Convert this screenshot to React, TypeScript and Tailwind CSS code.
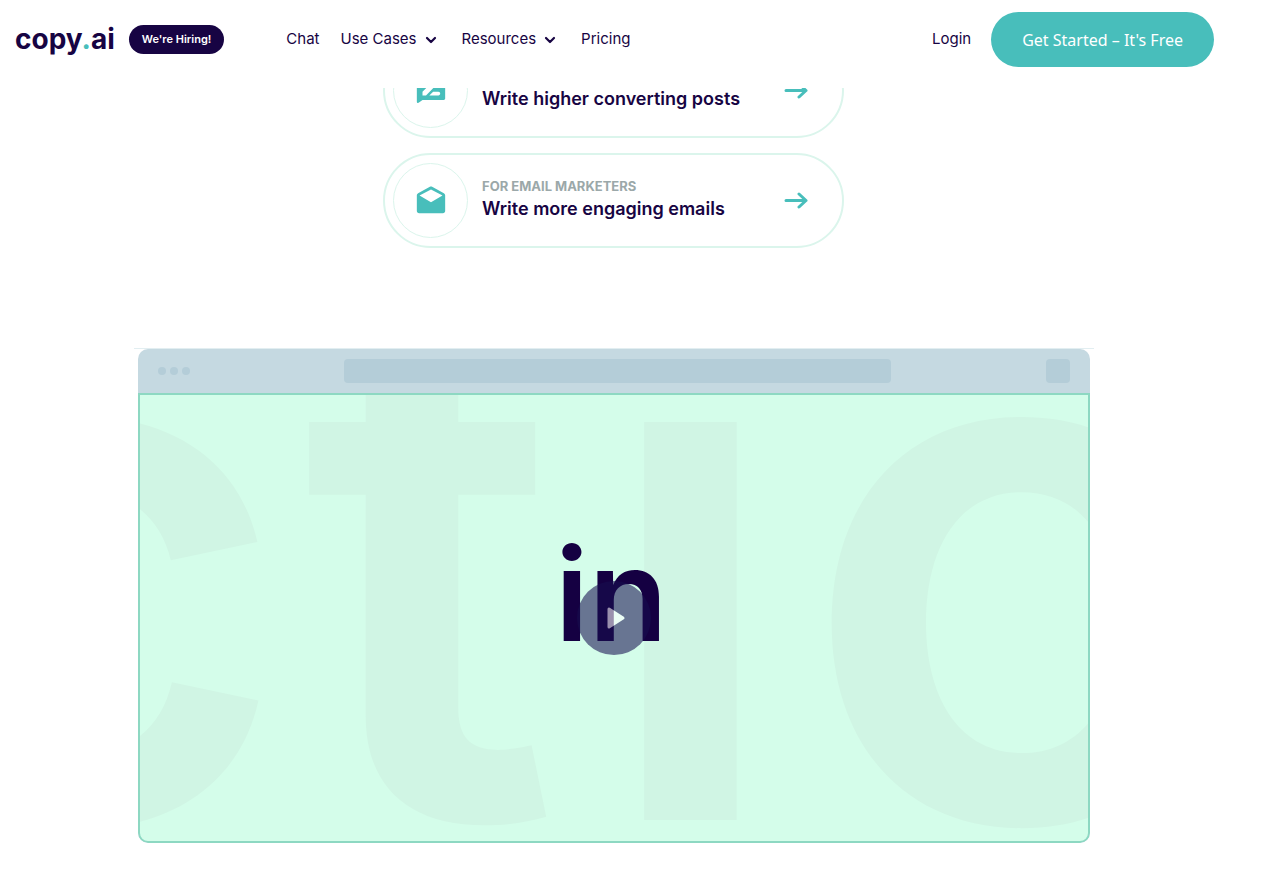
import React from "react";

type CardProps = { label?: string; title: string; icon: React.ReactNode };

function Chevron() {
  return (
    <svg width="12" height="8" viewBox="0 0 12 8" fill="none" stroke="currentColor" strokeWidth="2.2" strokeLinecap="round" strokeLinejoin="round" aria-hidden="true">
      <path d="M2 2l4 4 4-4" />
    </svg>
  );
}

function Arrow() {
  return (
    <svg width="24" height="18" viewBox="0 0 24 18" fill="none" stroke="currentColor" strokeWidth="3" strokeLinecap="round" strokeLinejoin="round" aria-hidden="true">
      <path d="M2 8.500h20M15 2l7 6.500-7 6.500" />
    </svg>
  );
}

function ReviewIcon() {
  return (
    <svg width="34" height="34" viewBox="0 0 24 24" fill="currentColor" aria-hidden="true">
      <path d="M21 2H3c-.55 0-1 .45-1 1v16.500c0 .8.800 1.200 1.500.7L6 18.300H21c.55 0 1-.45 1-1V3c0-.55-.45-1-1-1zM6 15.200v-2.670l6.880-6.880c.2-.2.51-.2.71 0l1.770 1.770c.2.2.2.51 0 .71L8.470 15.200H6zm11.200 0h-6.400l2.700-2.700h3.700c.8 0 1.300.6 1.300 1.350s-.5 1.350-1.300 1.350z" />
    </svg>
  );
}

function MailIcon() {
  return (
    <svg width="34" height="34" viewBox="0 0 24 24" fill="currentColor" aria-hidden="true">
      <path d="M22 8c0-.7-.35-1.200-.9-1.550L12.800 2c-.5-.3-1.100-.3-1.600 0L2.900 6.450C2.350 6.800 2 7.300 2 8v11c0 .9.700 1.600 1.600 1.600h16.800c.9 0 1.600-.7 1.600-1.600V8zM12 12.900L3.900 8.100 12 3.900l8.100 4.200L12 12.900z" />
    </svg>
  );
}

function Card({ label, title, icon }: CardProps) {
  return (
    <a href="#" className="flex h-[95px] items-center rounded-full border-2 border-[#dbf5ec] pr-[34px] pl-2">
      <span className="flex size-[75px] shrink-0 items-center justify-center rounded-full border border-[#dbf5ec] text-[#48bebb]">
        {icon}
      </span>
      <span className="ml-3.5 flex flex-1 flex-col pb-0.5">
        <span className="h-4 text-[13px] leading-4 font-bold text-[#9ba8a9]">{label}</span>
        <span className="mt-[3px] text-lg leading-6 font-semibold">{title}</span>
      </span>
      <span className="text-[#48bebb]">
        <Arrow />
      </span>
    </a>
  );
}

export default function App() {
  return (
    <div className="min-h-screen bg-white font-[Inter,sans-serif] text-[#170443]">
      <header className="fixed inset-x-0 top-0 z-10 bg-white pr-8">
        <div className="flex h-[88px] items-center px-[15px] pb-[9px]">
          <a href="#" className="pb-0.5 text-[28px] leading-9 font-bold">
            copy<span className="text-[#48bebb]">.</span>ai
          </a>
          <a href="#" className="ml-3.5 flex h-[29px] items-center rounded-full bg-[#170443] px-[13px] text-[11px] font-semibold text-white">
            We're Hiring!
          </a>
          <nav className="ml-[62px] flex items-center gap-[21px] text-[15px]">
            <a href="#">Chat</a>
            <button type="button" className="flex items-center gap-2 pr-1">
              Use Cases <Chevron />
            </button>
            <button type="button" className="flex items-center gap-2 pr-1">
              Resources <Chevron />
            </button>
            <a href="#">Pricing</a>
          </nav>
          <a href="#" className="ml-auto text-[15px]">Login</a>
          <a href="#" className="ml-5 flex h-[55px] items-center rounded-full bg-[#48bebb] px-[31px] font-['Noto_Sans',sans-serif] text-base text-white">
            Get Started – It's Free
          </a>
        </div>
      </header>

      <main className="flex flex-col items-center pt-[43px] pr-[34px] pb-10">
        <section className="flex w-full max-w-[461px] flex-col gap-[15px]">
          <Card title="Write higher converting posts" icon={<ReviewIcon />} />
          <Card label="FOR EMAIL MARKETERS" title="Write more engaging emails" icon={<MailIcon />} />
        </section>

        <section className="mt-[100px] w-full max-w-[960px] border-t border-[#e2eef1] px-1">
          <div className="overflow-hidden rounded-[10px] bg-[#c5d9e1]">
            <div className="flex h-11 items-center justify-between px-5">
              <div className="flex w-[186px] gap-1">
                <span className="size-2 rounded-full bg-[#b4cdd8]" />
                <span className="size-2 rounded-full bg-[#b4cdd8]" />
                <span className="size-2 rounded-full bg-[#b4cdd8]" />
              </div>
              <div className="h-6 flex-1 rounded-sm bg-[#b4cdd8]" />
              <div className="flex w-[179px] justify-end">
                <span className="size-6 rounded bg-[#b4cdd8]" />
              </div>
            </div>
            <div className="relative overflow-hidden rounded-b-[10px] border-2 border-[#8dd8c2] bg-[#d4fdea]">
              <svg viewBox="0 0 948 446" className="block w-full" aria-hidden="true">
                <g fill="#d0f5e4" fontFamily="Inter" fontWeight="600" fontSize="729">
                  <text x="-276" y="425">c</text>
                  <text x="162" y="425">t</text>
                  <text x="455" y="425">i</text>
                  <text x="660" y="425">o</text>
                </g>
                <text x="415" y="246" fill="#150042" fontFamily="Inter" fontWeight="600" fontSize="129">in</text>
              </svg>
              <button type="button" aria-label="Play video" className="absolute inset-0 flex items-center justify-center">
                <svg width="74" height="74" viewBox="0 0 74 74" opacity=".57" aria-hidden="true">
                  <circle cx="37" cy="37" r="37" fill="#170f50" />
                  <path d="M32 28v18l14-9z" fill="#fff" stroke="#fff" strokeWidth="3" strokeLinejoin="round" />
                </svg>
              </button>
            </div>
          </div>
        </section>
      </main>
    </div>
  );
}
